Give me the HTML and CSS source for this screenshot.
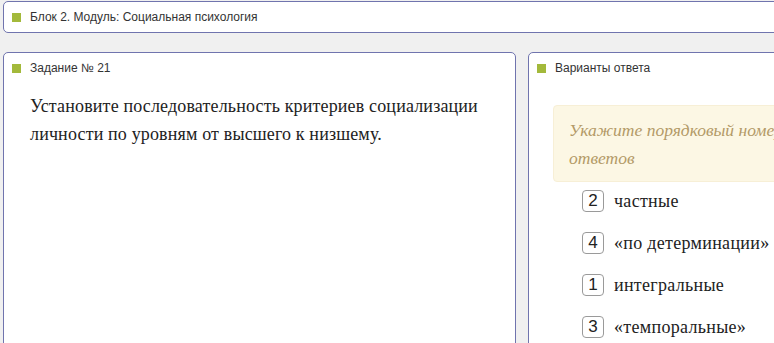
FILE: index.html
```html
<!DOCTYPE html>
<html lang="ru">
<head>
<meta charset="utf-8">
<title>Задание № 21</title>
<link rel="stylesheet" href="styles.css">
</head>
<body>
<div class="page">
  <div class="panel topbar">
    <span class="mark"></span><span class="ptitle">Блок 2. Модуль: Социальная психология</span>
  </div>
  <div class="cols">
    <div class="panel card left">
      <div class="head"><span class="mark"></span><span class="ptitle">Задание № 21</span></div>
      <div class="question">Установите последовательность критериев социализации личности по уровням от высшего к низшему.</div>
    </div>
    <div class="panel card right">
      <div class="head"><span class="mark"></span><span class="ptitle">Варианты ответа</span></div>
      <div class="hint">Укажите порядковый номер для всех вариантов ответов</div>
      <ul class="answers">
        <li><span class="num">2</span><span class="atext">частные</span></li>
        <li><span class="num">4</span><span class="atext">«по детерминации»</span></li>
        <li><span class="num">1</span><span class="atext">интегральные</span></li>
        <li><span class="num">3</span><span class="atext">«темпоральные»</span></li>
      </ul>
    </div>
  </div>
</div>
</body>
</html>
```

FILE: styles.css
```css
html, body {
  margin: 0;
  padding: 0;
  overflow: hidden;
  background: #f0f0f0;
}
body {
  width: 774px;
  height: 343px;
  font-family: "Liberation Sans", Arial, sans-serif;
}
.page {
  padding: 1px 0 0 3px;
  width: 1200px;
}
.panel {
  background: #fff;
  border: 1px solid #7074ae;
  border-radius: 5px;
  box-sizing: border-box;
}
.topbar {
  height: 32px;
  width: 1100px;
  display: flex;
  align-items: center;
  padding-left: 8px;
  margin-bottom: 19px;
}
.mark {
  width: 9px;
  height: 9px;
  background: #a3b93b;
  display: inline-block;
  flex: none;
  margin-right: 9px;
}
.ptitle {
  font-size: 12px;
  color: #333;
}
.cols {
  display: flex;
  gap: 12px;
}
.card {
  height: 320px;
}
.left {
  width: 513px;
}
.right {
  width: 440px;
}
.head {
  display: flex;
  align-items: center;
  height: 28px;
  padding-left: 8px;
  padding-top: 1px;
}
.question {
  padding: 0 0 0 26px;
  margin-top: 10px;
  font-family: "Liberation Serif", "Times New Roman", serif;
  font-size: 18px;
  letter-spacing: 0.15px;
  line-height: 28px;
  color: #222;
  width: 470px;
}
.hint {
  margin: 23px 0 0 24px;
  width: 370px;
  background: #fcf7e4;
  border: 1px solid #f7efd6;
  border-radius: 4px;
  padding: 10px 15px 9px 15px;
  font-family: "Liberation Serif", "Times New Roman", serif;
  font-style: italic;
  font-size: 17.5px;
  line-height: 28px;
  color: #b39a67;
}
.answers {
  list-style: none;
  margin: -2px 0 0 53px;
  padding: 0;
}
.answers li {
  display: flex;
  align-items: center;
  height: 42px;
}
.num {
  width: 22px;
  height: 22px;
  box-sizing: border-box;
  border: 1px solid #9a9a9a;
  border-radius: 4px;
  display: flex;
  align-items: center;
  justify-content: center;
  font-family: "Liberation Sans", Arial, sans-serif;
  font-size: 17px;
  color: #222;
  margin-right: 10px;
}
.atext {
  font-family: "Liberation Serif", "Times New Roman", serif;
  font-size: 18px;
  letter-spacing: 0.3px;
  color: #222;
}
```
